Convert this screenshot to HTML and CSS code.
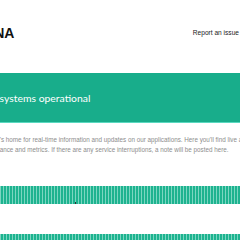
FILE: index.html
```html
<!DOCTYPE html>
<html>
<head>
<meta charset="utf-8">
<link rel="stylesheet" href="styles.css">
</head>
<body>
<div class="page">
  <header class="header">
    <div class="logo">FORTUNA</div>
    <a class="report" href="#">Report an issue</a>
  </header>
  <section class="banner">
    <span class="banner-text">All systems operational</span>
  </section>
  <p class="intro">Fortuna's home for real-time information and updates on our applications. Here you'll find live and<br>performance and metrics. If there are any service interruptions, a note will be posted here.</p>
  <section class="group">
    <div class="bar"></div>
    <div class="bar-meta"><span class="dot"></span></div>
  </section>
  <section class="group second">
    <div class="label-row"></div>
    <div class="bar"></div>
  </section>
</div>
</body>
</html>
```
FILE: styles.css
```css
html, body {
  margin: 0;
  padding: 0;
  background: #ffffff;
  overflow: hidden;
  width: 240px;
  height: 240px;
}

.page {
  margin-left: -32px;
  width: 272px;
  display: flex;
  flex-direction: column;
  font-family: "Liberation Sans", Arial, sans-serif;
}

.header {
  height: 73px;
  display: flex;
  align-items: flex-start;
  justify-content: space-between;
  padding: 25px 1px 0 0;
  box-sizing: border-box;
}

.logo {
  font-family: "Liberation Sans", Arial, sans-serif;
  font-weight: 700;
  font-size: 14px;
  line-height: 16px;
  color: #111;
  margin-left: -22px;
}

.report {
  font-size: 6.6px;
  line-height: 10px;
  color: #222;
  text-decoration: none;
  margin-top: 3px;
}

.banner {
  height: 49px;
  background: #18ad8b;
  border-bottom: 1px solid #5ad9c0;
  display: flex;
  align-items: center;
  padding-left: 17px;
}

.banner-text {
  font-family: "Lato", "Open Sans", sans-serif;
  font-size: 10.4px;
  color: #ffffff;
}

.intro {
  margin: 12px 0 0 0;
  padding-left: 10px;
  font-size: 6.3px;
  line-height: 10px;
  color: #8d8d8d;
  white-space: nowrap;
  font-family: "Liberation Sans", Arial, sans-serif;
}

.group {
  margin-top: 31px;
}

.bar {
  height: 18px;
  background: repeating-linear-gradient(90deg, #1db38f 0, #1db38f 2px, #7bd6c1 2px, #7bd6c1 3px);
}

.bar-meta {
  height: 4px;
  position: relative;
}

.dot {
  position: absolute;
  left: 107px;
  top: -2px;
  width: 1px;
  height: 2px;
  background: #333;
}

.second {
  margin-top: 0;
}

.label-row {
  height: 26px;
}
```
